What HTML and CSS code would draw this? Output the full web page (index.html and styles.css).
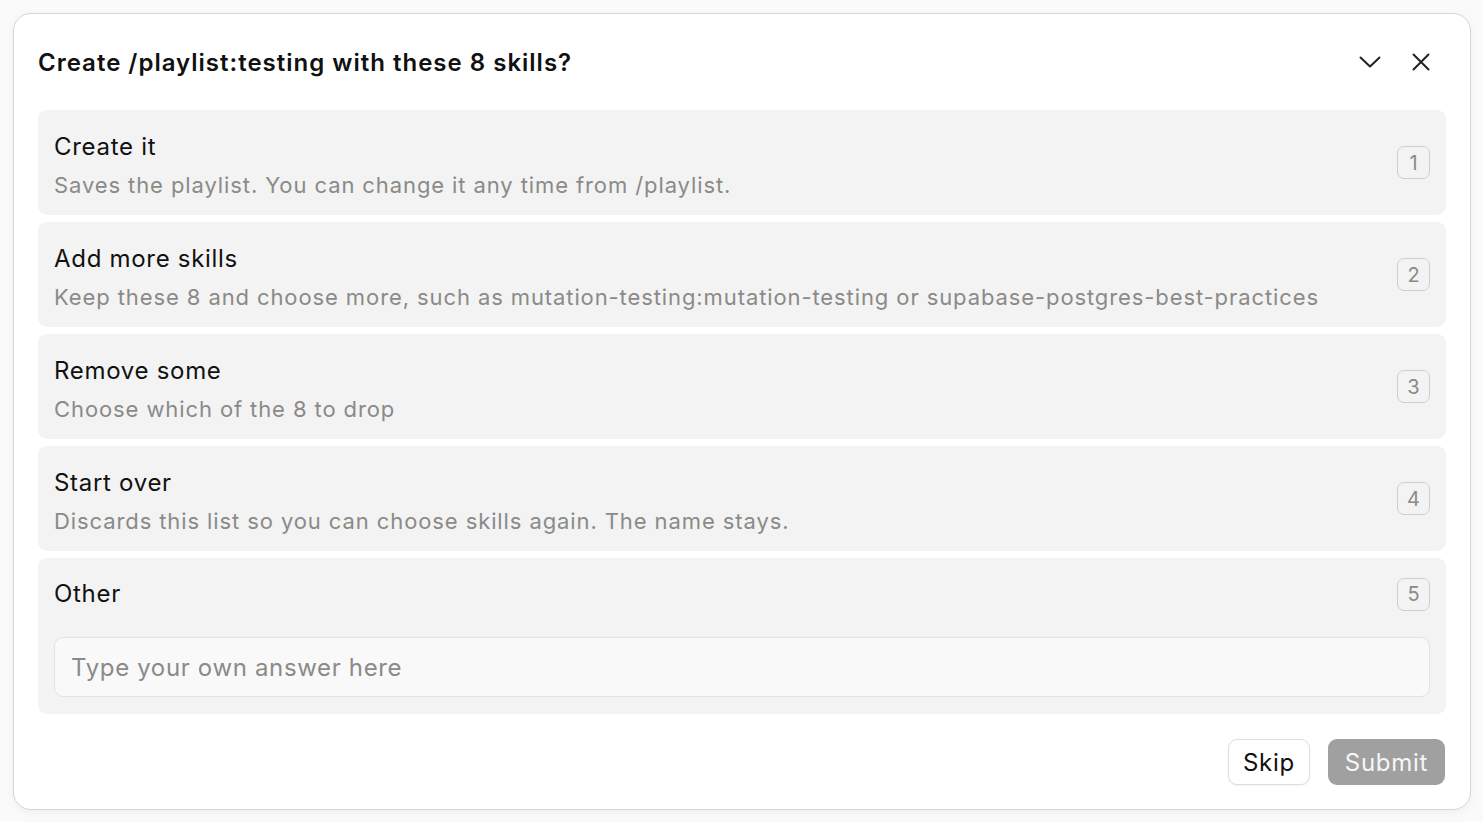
FILE: index.html
```html
<!DOCTYPE html>
<html lang="en">
<head>
<meta charset="utf-8">
<title>Create playlist</title>
<link rel="stylesheet" href="styles.css">
</head>
<body>
<div class="dialog">
  <div class="header">
    <h1 class="title">Create /playlist:testing with these 8 skills?</h1>
    <div class="header-actions">
      <button class="icon-btn" aria-label="Collapse">
        <svg width="22" height="12" viewBox="0 0 22 12"><path d="M1.5 1.5 L11 10.5 L20.5 1.5" fill="none" stroke="#222" stroke-width="2" stroke-linecap="round" stroke-linejoin="round"/></svg>
      </button>
      <button class="icon-btn" aria-label="Close">
        <svg width="18" height="18" viewBox="0 0 18 18"><path d="M1.5 1.5 L16.5 16.5 M16.5 1.5 L1.5 16.5" fill="none" stroke="#222" stroke-width="2" stroke-linecap="round"/></svg>
      </button>
    </div>
  </div>

  <div class="options">
    <div class="option">
      <div class="option-text">
        <div class="option-title">Create it</div>
        <div class="option-desc">Saves the playlist. You can change it any time from /playlist.</div>
      </div>
      <span class="badge">1</span>
    </div>
    <div class="option">
      <div class="option-text">
        <div class="option-title">Add more skills</div>
        <div class="option-desc">Keep these 8 and choose more, such as mutation-testing:mutation-testing or supabase-postgres-best-practices</div>
      </div>
      <span class="badge">2</span>
    </div>
    <div class="option">
      <div class="option-text">
        <div class="option-title">Remove some</div>
        <div class="option-desc">Choose which of the 8 to drop</div>
      </div>
      <span class="badge">3</span>
    </div>
    <div class="option">
      <div class="option-text">
        <div class="option-title">Start over</div>
        <div class="option-desc">Discards this list so you can choose skills again. The name stays.</div>
      </div>
      <span class="badge">4</span>
    </div>
    <div class="option option-other">
      <div class="other-row">
        <div class="option-title">Other</div>
        <span class="badge">5</span>
      </div>
      <input class="other-input" type="text" placeholder="Type your own answer here">
    </div>
  </div>

  <div class="footer">
    <button class="btn btn-skip">Skip</button>
    <button class="btn btn-submit">Submit</button>
  </div>
</div>
</body>
</html>
```

FILE: styles.css
```css
* { box-sizing: border-box; }

html, body {
  margin: 0;
  padding: 0;
}

body {
  background: #fafafa;
  font-family: Inter, "Noto Sans", "Liberation Sans", sans-serif;
  color: #111;
  padding: 13px 12px 12px 13px;
}

.dialog {
  width: 1458px;
  background: #fff;
  border: 1px solid #d6d6d6;
  border-radius: 18px;
  box-shadow: 0 2px 8px rgba(0, 0, 0, 0.05);
  padding: 24px 24px 24px 24px;
  display: flex;
  flex-direction: column;
}

.header {
  height: 48px;
  flex-shrink: 0;
  display: flex;
  align-items: center;
  justify-content: space-between;
  margin-bottom: 24px;
}

.title {
  margin: 0;
  font-size: 24px;
  font-weight: 600;
  letter-spacing: 1px;
  color: #111;
}

.header-actions {
  display: flex;
  align-items: center;
  gap: 31px;
  margin-right: 16px;
}

.icon-btn {
  background: none;
  border: none;
  padding: 0;
  display: flex;
  align-items: center;
  justify-content: center;
  cursor: pointer;
}

.options {
  display: flex;
  flex-direction: column;
  gap: 7px;
}

.option {
  background: #f3f3f3;
  border-radius: 9px;
  height: 105px;
  padding: 0 16px;
  display: flex;
  align-items: center;
  justify-content: space-between;
}

.option-text {
  display: flex;
  flex-direction: column;
  gap: 6px;
  align-self: stretch;
  padding: 21px 0 14px 0;
}

.option-title {
  font-size: 24px;
  line-height: 32px;
  letter-spacing: 0.7px;
  color: #111;
}

.option-desc {
  font-size: 22px;
  line-height: 32px;
  letter-spacing: 0.9px;
  color: #8a8a88;
}

.badge {
  width: 33px;
  height: 33px;
  border: 1.5px solid #cfcfcf;
  border-radius: 7px;
  display: flex;
  align-items: center;
  justify-content: center;
  font-size: 20px;
  color: #8a8a88;
  flex-shrink: 0;
}

.option-other {
  height: 156px;
  flex-direction: column;
  align-items: stretch;
  padding: 20px 16px 17px 16px;
  gap: 27px;
}

.other-row {
  height: 32px;
  display: flex;
  align-items: center;
  justify-content: space-between;
}

.other-input {
  height: 60px;
  width: 100%;
  background: #f9f9f9;
  border: 1.5px solid #e3e3e3;
  border-radius: 9px;
  padding: 0 16px;
  font-family: inherit;
  font-size: 24px;
  letter-spacing: 0.65px;
  color: #111;
  outline: none;
}

.other-input::placeholder {
  color: #8a8a88;
}

.footer {
  margin-top: 25px;
  display: flex;
  justify-content: flex-end;
  gap: 18px;
  margin-right: 1px;
}

.btn {
  height: 46px;
  border-radius: 9px;
  font-family: inherit;
  font-size: 24px;
  letter-spacing: 0.7px;
  cursor: pointer;
}

.btn-skip {
  background: #fff;
  border: 1.5px solid #dedede;
  color: #111;
  padding: 0 14px;
  box-shadow: 0 1px 2px rgba(0, 0, 0, 0.05);
}

.btn-submit {
  background: #a0a0a0;
  border: none;
  color: #f6f6f6;
  padding: 0 17px;
}
```
